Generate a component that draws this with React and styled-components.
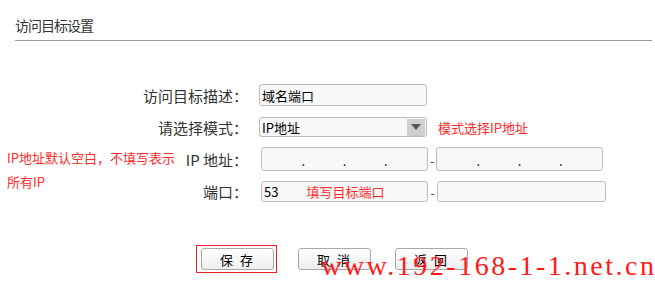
import React from "react";
import styled, { createGlobalStyle } from "styled-components";

const Global = createGlobalStyle`
  body {
    margin: 0;
    background: #fff;
    font-family: "Noto Sans CJK SC", "Liberation Sans", sans-serif;
    color: #333;
  }
`;

const Page = styled.div`
  position: relative;
  width: 655px;
  height: 282px;
  overflow: hidden;
`;

const Title = styled.div`
  margin: 0 3px 0 15px;
  padding-top: 15px;
  height: 25px;
  border-bottom: 1px solid #9a9a9a;
  font-size: 14px;
  line-height: 20px;
  letter-spacing: -1px;
  color: #333;
`;

const Form = styled.div`
  display: grid;
  grid-template-columns: 175px 66px 1fr;
  grid-auto-rows: 32px;
  padding-left: 7px;
  margin-top: 38px;
`;

const Label = styled.div`
  grid-column: ${(p) => (p.$wide ? "1 / 3" : "2 / 3")};
  display: flex;
  align-items: center;
  justify-content: flex-end;
  font-size: 15px;
  color: #333;
  white-space: nowrap;
`;

const Note = styled.div`
  grid-column: 1 / 2;
  grid-row: 3 / 5;
  padding-top: 3px;
  font-size: 13px;
  line-height: 24px;
  color: #ff2a2a;
`;

const Cell = styled.div`
  grid-column: 3 / 4;
  display: flex;
  align-items: center;
  padding-left: ${(p) => p.$indent || 11}px;
`;

const Box = styled.div`
  box-sizing: border-box;
  width: ${(p) => p.$w}px;
  height: ${(p) => p.$h}px;
  border: 1px solid #bcbcbc;
  border-radius: 3px;
  background: #f8f8f8;
  display: flex;
  align-items: center;
  padding-left: 2px;
  font-size: 13px;
  color: #000;
`;

const Arrow = styled.div`
  margin-left: auto;
  margin-right: 1px;
  width: 18px;
  height: 17px;
  background: #cfcfcf;
  display: flex;
  align-items: center;
  justify-content: center;
`;

const Hint = styled.span`
  font-size: 13px;
  color: #ff2a2a;
  margin-left: ${(p) => p.$gap || 0}px;
`;

const IpBox = styled(Box)`
  padding: 0;
`;

const Seg = styled.div`
  flex: 1;
  height: 100%;
`;

const Dot = styled.span`
  width: 0;
  display: flex;
  justify-content: center;
  font-size: 13px;
  line-height: 13px;
  margin-top: 2px;
`;

const Dash = styled.span`
  width: ${(p) => p.$w || 8}px;
  text-align: center;
  font-size: 12px;
  color: #333;
  margin-top: 2px;
`;

const Buttons = styled.div`
  display: flex;
  align-items: center;
  gap: 24px;
  margin: 38px 0 0 196px;
`;

const Focus = styled.div`
  border: 1px solid #e8202a;
  padding: 2px 2px 2px 4px;
  display: flex;
  margin-right: -3px;
`;

const Button = styled.div`
  box-sizing: border-box;
  width: 73px;
  height: 22px;
  border: 1px solid #a8a8a8;
  border-radius: 3px;
  background: linear-gradient(#ffffff, #eeeeee);
  display: flex;
  align-items: center;
  justify-content: center;
  font-size: 13px;
  letter-spacing: 2px;
  color: #000;
`;

const Watermark = styled.div`
  position: absolute;
  left: 321px;
  top: 252px;
  font-family: "Liberation Serif", serif;
  font-size: 28px;
  line-height: 28px;
  letter-spacing: 2.5px;
  color: #ff1a1a;
  white-space: nowrap;
  pointer-events: none;
`;

function Ip() {
  return (
    <IpBox $w={167} $h={24}>
      <Seg />
      <Dot>.</Dot>
      <Seg />
      <Dot>.</Dot>
      <Seg />
      <Dot>.</Dot>
      <Seg />
    </IpBox>
  );
}

export default function App() {
  return (
    <Page>
      <Global />
      <Title>访问目标设置</Title>
      <Form>
        <Label $wide>访问目标描述：</Label>
        <Cell>
          <Box $w={168} $h={22}>域名端口</Box>
        </Cell>

        <Label $wide>请选择模式：</Label>
        <Cell>
          <Box $w={168} $h={20}>
            IP地址
            <Arrow>
              <svg width="10" height="6" viewBox="0 0 10 6">
                <path d="M0 0 H10 L5 6 Z" fill="#555" />
              </svg>
            </Arrow>
          </Box>
          <Hint $gap={11}>模式选择IP地址</Hint>
        </Cell>

        <Note>IP地址默认空白，不填写表示所有IP</Note>
        <Label>IP 地址：</Label>
        <Cell $indent={13}>
          <Ip />
          <Dash>-</Dash>
          <Ip />
        </Cell>

        <Label>端口：</Label>
        <Cell $indent={13}>
          <Box $w={167} $h={21}>
            53
            <Hint $gap={28}>填写目标端口</Hint>
          </Box>
          <Dash $w={9}>-</Dash>
          <Box $w={169} $h={21} />
        </Cell>
      </Form>
      <Buttons>
        <Focus>
          <Button>保 存</Button>
        </Focus>
        <Button>取 消</Button>
        <Button>返 回</Button>
      </Buttons>
      <Watermark>www.192-168-1-1.net.cn</Watermark>
    </Page>
  );
}
